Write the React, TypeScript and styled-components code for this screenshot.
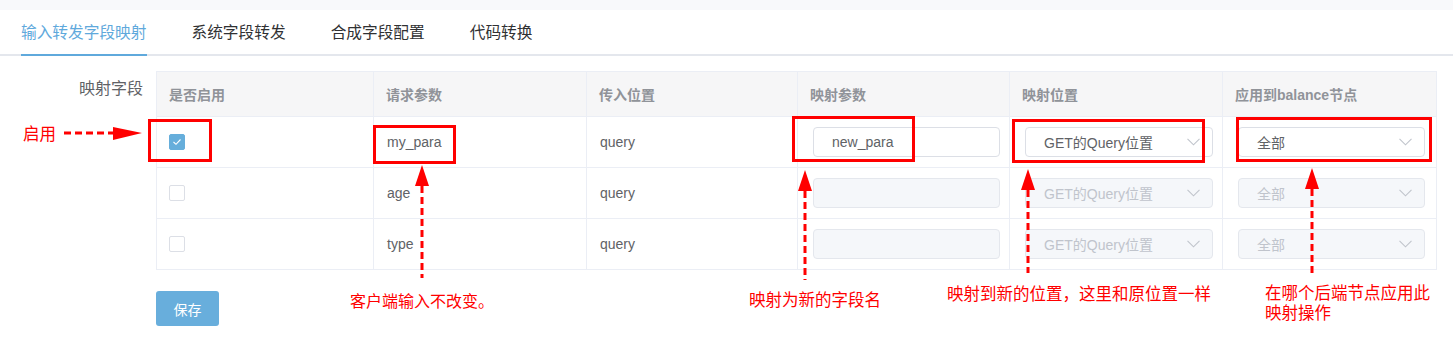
import React from 'react';
import styled, { createGlobalStyle } from 'styled-components';

const GlobalStyle = createGlobalStyle`
  html, body { margin: 0; padding: 0; background: #fff; }
  body { font-family: "Liberation Sans", "Noto Sans CJK SC", sans-serif; color: #606266; }
  * { box-sizing: border-box; }
`;

const Page = styled.div`
  position: relative;
  width: 1453px;
  height: 343px;
  overflow: hidden;
`;

const TopStrip = styled.div`
  height: 10px;
  background: #f8f9fb;
`;

const TabBar = styled.div`
  display: flex;
  gap: 45px;
  padding-left: 21px;
  border-bottom: 2px solid #e4e7ed;
`;

const Tab = styled.div<{ $active?: boolean }>`
  height: 46px;
  line-height: 44px;
  font-size: 15.7px;
  font-family: "Noto Sans CJK SC", sans-serif;
  color: ${(p) => (p.$active ? '#5fa9dc' : '#303133')};
  border-bottom: 2px solid ${(p) => (p.$active ? '#5fa9dc' : 'transparent')};
  margin-bottom: -2px;
`;

const Body = styled.div`
  display: flex;
  padding-top: 15px;
`;

const FieldLabel = styled.div`
  width: 156px;
  padding: 6px 13px 0 0;
  text-align: right;
  font-size: 16px;
  line-height: 20px;
  font-family: "Noto Sans CJK SC", sans-serif;
  color: #606266;
`;

const Main = styled.div`
  display: flex;
  flex-direction: column;
  align-items: flex-start;
`;

const Grid = styled.table`
  width: 1280px;
  border-collapse: collapse;
  table-layout: fixed;
  border: 1px solid #ebeef5;
`;

const HeadCell = styled.th`
  height: 45px;
  padding: 0 0 0 12px;
  text-align: left;
  background: #f6f6f7;
  border: 1px solid #ebeef5;
  font-size: 14px;
  font-weight: bold;
  color: #909399;
`;

const Cell = styled.td<{ $pad?: string }>`
  height: 51px;
  padding: ${(p) => p.$pad ?? '0 0 0 13px'};
  border: 1px solid #ebeef5;
  font-size: 14px;
  color: #606266;
  vertical-align: middle;
`;

const Box = styled.span<{ $checked?: boolean }>`
  display: flex;
  align-items: center;
  justify-content: center;
  width: 16px;
  height: 16px;
  border-radius: 2px;
  background: ${(p) => (p.$checked ? '#66aedb' : '#fff')};
  border: 1px solid ${(p) => (p.$checked ? '#66aedb' : '#dcdfe6')};
`;

const Field = styled.div<{ $disabled?: boolean }>`
  display: flex;
  align-items: center;
  justify-content: space-between;
  width: 100%;
  height: 30px;
  padding: 0 12px 0 18px;
  border: 1px solid ${(p) => (p.$disabled ? '#e4e7ed' : '#dcdfe6')};
  border-radius: 4px;
  background: ${(p) => (p.$disabled ? '#f5f7fa' : '#fff')};
  color: ${(p) => (p.$disabled ? '#c0c4cc' : '#606266')};
  font-size: 14px;
`;

const SaveButton = styled.button`
  margin-top: 21px;
  width: 63px;
  height: 35px;
  border: none;
  border-radius: 3px;
  background: #68aedc;
  color: #fff;
  font-size: 14px;
  font-family: "Noto Sans CJK SC", sans-serif;
`;

const Overlay = styled.div`
  position: absolute;
  inset: 0;
  pointer-events: none;
`;

const RedFrame = styled.div<{ $x: number; $y: number; $w: number; $h: number }>`
  position: absolute;
  left: ${(p) => p.$x}px;
  top: ${(p) => p.$y}px;
  width: ${(p) => p.$w}px;
  height: ${(p) => p.$h}px;
  border: 3px solid #ff0000;
`;

const Note = styled.div<{ $x: number; $y: number; $size?: number }>`
  position: absolute;
  left: ${(p) => p.$x}px;
  top: ${(p) => p.$y}px;
  font-family: "Noto Sans CJK SC", sans-serif;
  font-size: ${(p) => p.$size ?? 16.5}px;
  line-height: 20px;
  color: #ff0000;
  white-space: nowrap;
`;

const ArrowSvg = styled.svg<{ $x: number; $y: number }>`
  position: absolute;
  left: ${(p) => p.$x}px;
  top: ${(p) => p.$y}px;
  overflow: visible;
`;

const UpArrow = ({ x, top, bottom }: { x: number; top: number; bottom: number }) => (
  <ArrowSvg $x={x - 8} $y={top} width={16} height={bottom - top}>
    <polygon points={`8,0 1,21 15,21`} fill="#ff0000" />
    <line x1={8} y1={21} x2={8} y2={bottom - top} stroke="#ff0000" strokeWidth={3} strokeDasharray="7 4" />
  </ArrowSvg>
);

const Chevron = () => (
  <svg width="13" height="8" viewBox="0 0 13 8">
    <polyline points="0.5,0.8 6.5,6.8 12.5,0.8" fill="none" stroke="#c0c4cc" strokeWidth="1.1" />
  </svg>
);

const Check = () => (
  <svg width="10" height="8" viewBox="0 0 10 8">
    <polyline points="1.5,4 4,6.3 8.5,1.5" fill="none" stroke="#fff" strokeWidth="1.1" />
  </svg>
);

type Row = { enabled: boolean; name: string; mapped: string };
const rows: Row[] = [
  { enabled: true, name: 'my_para', mapped: 'new_para' },
  { enabled: false, name: 'age', mapped: '' },
  { enabled: false, name: 'type', mapped: '' },
];

const headers = ['是否启用', '请求参数', '传入位置', '映射参数', '映射位置', '应用到balance节点'];
const widths = [217, 213, 211, 212, 213, 214];

export default function App() {
  return (
    <Page>
      <GlobalStyle />
      <TopStrip />
      <TabBar>
        <Tab $active>输入转发字段映射</Tab>
        <Tab>系统字段转发</Tab>
        <Tab>合成字段配置</Tab>
        <Tab>代码转换</Tab>
      </TabBar>
      <Body>
        <FieldLabel>映射字段</FieldLabel>
        <Main>
          <Grid>
            <colgroup>
              {widths.map((w, i) => (
                <col key={i} style={{ width: w }} />
              ))}
            </colgroup>
            <thead>
              <tr>
                {headers.map((h) => (
                  <HeadCell key={h}>{h}</HeadCell>
                ))}
              </tr>
            </thead>
            <tbody>
              {rows.map((r) => (
                <tr key={r.name}>
                  <Cell $pad="0 0 0 12px">
                    <Box $checked={r.enabled}>{r.enabled && <Check />}</Box>
                  </Cell>
                  <Cell>{r.name}</Cell>
                  <Cell>query</Cell>
                  <Cell $pad="0 9px 0 15px">
                    <Field $disabled={!r.enabled}>{r.mapped}</Field>
                  </Cell>
                  <Cell $pad="0 9px 0 15px">
                    <Field $disabled={!r.enabled}>
                      <span>GET的Query位置</span>
                      <Chevron />
                    </Field>
                  </Cell>
                  <Cell $pad="0 11px 0 15px">
                    <Field $disabled={!r.enabled}>
                      <span>全部</span>
                      <Chevron />
                    </Field>
                  </Cell>
                </tr>
              ))}
            </tbody>
          </Grid>
          <SaveButton>保存</SaveButton>
        </Main>
      </Body>

      <Overlay>
        <RedFrame $x={148} $y={119} $w={64} $h={43} />
        <RedFrame $x={373} $y={125} $w={83} $h={39} />
        <RedFrame $x={792} $y={116} $w={123} $h={46} />
        <RedFrame $x={1012} $y={119} $w={193} $h={44} />
        <RedFrame $x={1236} $y={117} $w={196} $h={45} />

        <Note $x={23} $y={123}>启用</Note>
        <ArrowSvg $x={64} $y={126} width={80} height={15}>
          <line x1={0} y1={7} x2={50} y2={7} stroke="#ff0000" strokeWidth={3} strokeDasharray="7 4" />
          <polygon points="49,1 78,7 49,14" fill="#ff0000" />
        </ArrowSvg>

        <UpArrow x={422} top={165} bottom={278} />
        <UpArrow x={805} top={170} bottom={280} />
        <UpArrow x={1028} top={169} bottom={273} />
        <UpArrow x={1312} top={168} bottom={273} />

        <Note $x={350} $y={290} $size={16}>客户端输入不改变。</Note>
        <Note $x={749} $y={289}>映射为新的字段名</Note>
        <Note $x={947} $y={283}>映射到新的位置，这里和原位置一样</Note>
        <Note $x={1265} $y={282}>
          在哪个后端节点应用此
          <br />
          映射操作
        </Note>
      </Overlay>
    </Page>
  );
}
